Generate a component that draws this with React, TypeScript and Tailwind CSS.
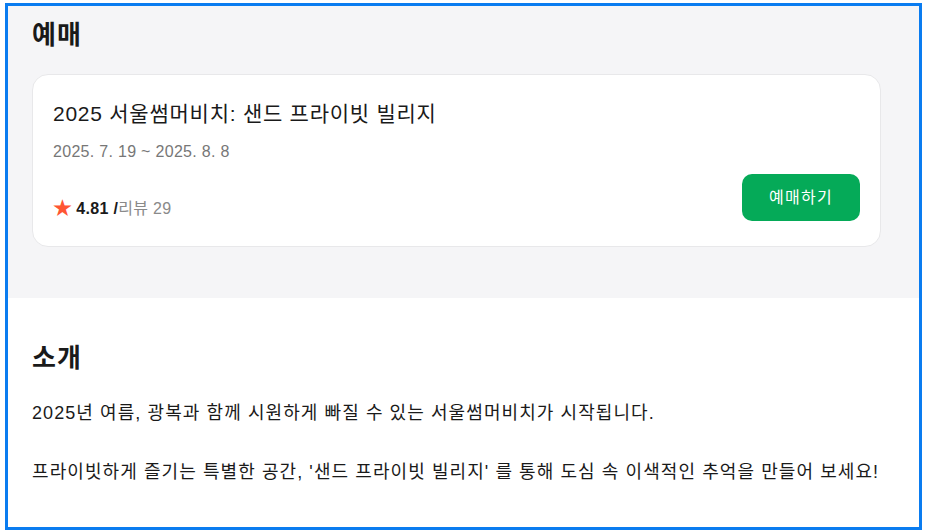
import React from "react";

const font = { fontFamily: '"Liberation Sans", "Noto Sans CJK KR", sans-serif' };

export default function App() {
  return (
    <div className="w-[926px] h-[530px] bg-white pl-[5px] pr-[4px] pt-[3px] overflow-hidden" style={font}>
      <div className="h-[527px] border-[3px] border-[#0a7cf0] flex flex-col overflow-hidden">
        <section className="bg-[#f5f5f7] h-[292px] shrink-0 pl-[24px] pt-[12px]">
          <h2 className="text-[26px] leading-[34px] font-bold text-[#1a1a1a] tracking-[1px]">예매</h2>
          <div className="mt-[22px] w-[849px] h-[173px] bg-white border border-[#e8e8ea] rounded-[16px] px-[20px] pt-[25px] flex flex-col">
            <div className="text-[21px] leading-[28px] text-[#1a1a1a] tracking-[0.75px]">2025 서울썸머비치: 샌드 프라이빗 빌리지</div>
            <div className="mt-[14px] text-[16px] leading-[20px] text-[#777777] tracking-[0.3px]">2025. 7. 19 ~ 2025. 8. 8</div>
            <div className="mt-auto mb-[25px] flex items-end justify-between">
              <div className="flex items-center text-[16px] leading-[20px] pb-[2px] tracking-[0.3px]">
                <span className="text-[#ff5533] text-[19px] mr-[4px]">★</span>
                <span className="font-bold text-[#1a1a1a]">4.81 /</span>
                <span className="text-[#8a8a8a]">리뷰 29</span>
              </div>
              <button className="w-[118px] h-[47px] rounded-[10px] bg-[#05aa58] text-white text-[16px] tracking-[1.3px]">예매하기</button>
            </div>
          </div>
        </section>
        <section className="bg-white pl-[24px] pt-[43px]">
          <h2 className="text-[26px] leading-[34px] font-bold text-[#1a1a1a] tracking-[1px]">소개</h2>
          <p className="mt-[24px] text-[18px] leading-[29.5px] text-[#1a1a1a] tracking-[1.08px] whitespace-pre-line">
            {"2025년 여름, 광복과 함께 시원하게 빠질 수 있는 서울썸머비치가 시작됩니다.\n\n프라이빗하게 즐기는 특별한 공간, '샌드 프라이빗 빌리지' 를 통해 도심 속 이색적인 추억을 만들어 보세요!"}
          </p>
        </section>
      </div>
    </div>
  );
}
